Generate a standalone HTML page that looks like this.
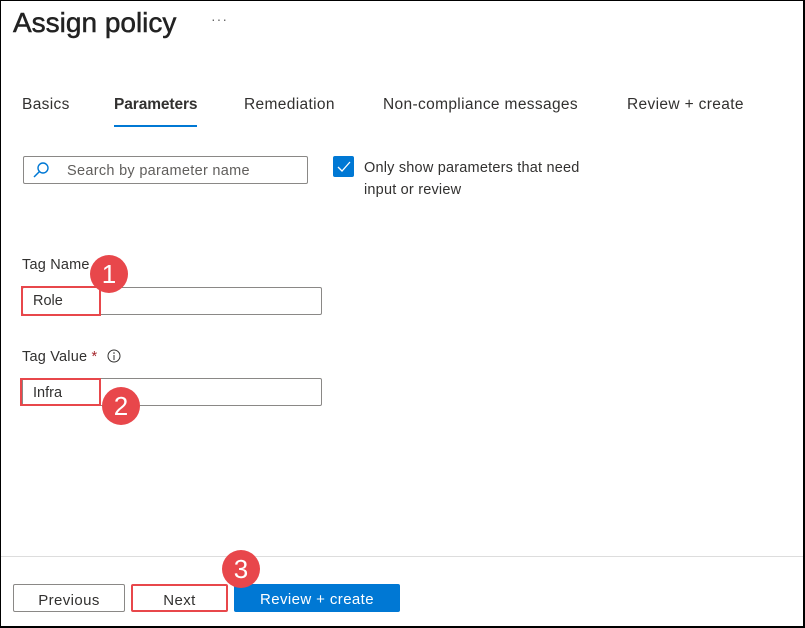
<!DOCTYPE html>
<html><head><meta charset="utf-8"><style>
*{margin:0;padding:0;box-sizing:border-box}
body{width:805px;height:628px;background:#fff;font-family:"Liberation Sans",sans-serif;color:#323130;position:relative;overflow:hidden}
.frame{position:absolute;left:0;top:0;width:805px;height:628px;border:1px solid #000;border-width:1px 2px 2px 1px}
.a{position:absolute;white-space:nowrap}
.tab{position:absolute;top:96px;font-size:15.5px;color:#323130;letter-spacing:0.35px}
.inp{position:absolute;border:1px solid #8a8886;border-radius:2px;background:#fff}
.red{position:absolute;border:2px solid #e8474b}
.circ{position:absolute;width:38px;height:38px;border-radius:50%;background:#e8474b;color:#fff;font-size:26px;text-align:center;line-height:38px}
.btn{position:absolute;top:584px;height:28px;font-size:15px;text-align:center;line-height:31px;border-radius:2px;letter-spacing:0.4px}
</style></head><body>
<div class="frame"></div>
<div class="a" style="left:13px;top:7px;font-size:28px;color:#222;-webkit-text-stroke:0.5px #222">Assign policy</div>
<div class="a" style="left:211px;top:11px;font-size:14px;color:#666;letter-spacing:1px">···</div>
<div class="tab" style="left:22px">Basics</div>
<div class="tab" style="left:114px;font-weight:bold;letter-spacing:-0.1px">Parameters</div>
<div class="a" style="left:114px;top:125px;width:83px;height:2px;background:#0078d4"></div>
<div class="tab" style="left:244px">Remediation</div>
<div class="tab" style="left:383px">Non-compliance messages</div>
<div class="tab" style="left:627px">Review + create</div>
<div class="inp" style="left:23px;top:156px;width:285px;height:28px"></div>
<svg class="a" style="left:32px;top:161px" width="18" height="18" viewBox="0 0 18 18"><circle cx="11" cy="7" r="5" fill="none" stroke="#0078d4" stroke-width="1.4"/><path d="M7.5 10.5L2 16" stroke="#0078d4" stroke-width="1.5"/></svg>
<div class="a" style="left:67px;top:163px;font-size:14.5px;color:#605e5c;letter-spacing:0.3px">Search by parameter name</div>
<div class="a" style="left:333px;top:156px;width:21px;height:21px;background:#0078d4;border-radius:2px"></div>
<svg class="a" style="left:333px;top:156px" width="21" height="21"><path d="M5 11l4 4 8-9" fill="none" stroke="#fff" stroke-width="1.3"/></svg>
<div class="a" style="left:364px;top:157px;font-size:14.5px;line-height:22px;letter-spacing:0.2px">Only show parameters that need<br>input or review</div>
<div class="a" style="left:22px;top:257px;font-size:14.5px;letter-spacing:0.2px">Tag Name</div>
<div class="inp" style="left:22px;top:287px;width:300px;height:28px"></div>
<div class="a" style="left:33px;top:293px;font-size:14.5px">Role</div>
<div class="red" style="left:21px;top:286px;width:80px;height:30px"></div>
<div class="circ" style="left:90px;top:255px">1</div>
<div class="a" style="left:22px;top:349px;font-size:14.5px;letter-spacing:0.2px">Tag Value <span style="color:#a4262c">*</span></div>
<svg class="a" style="left:106px;top:348px" width="16" height="16"><circle cx="8" cy="8" r="6" fill="none" stroke="#323130" stroke-width="1"/><path d="M8 7v5" stroke="#323130"/><circle cx="8" cy="5" r="0.8" fill="#323130"/></svg>
<div class="inp" style="left:22px;top:378px;width:300px;height:28px"></div>
<div class="a" style="left:33px;top:385px;font-size:14.5px">Infra</div>
<div class="red" style="left:20px;top:378px;width:81px;height:28px"></div>
<div class="circ" style="left:102px;top:387px">2</div>
<div class="a" style="left:1px;top:556px;width:802px;height:1px;background:#ddd"></div>
<div class="btn" style="left:13px;width:112px;border:1px solid #8a8886">Previous</div>
<div class="btn" style="left:131px;width:97px;border:2px solid #e8474b;line-height:29px">Next</div>
<div class="btn" style="left:234px;width:166px;background:#0078d4;color:#fff">Review + create</div>
<div class="circ" style="left:222px;top:550px">3</div>
</body></html>
